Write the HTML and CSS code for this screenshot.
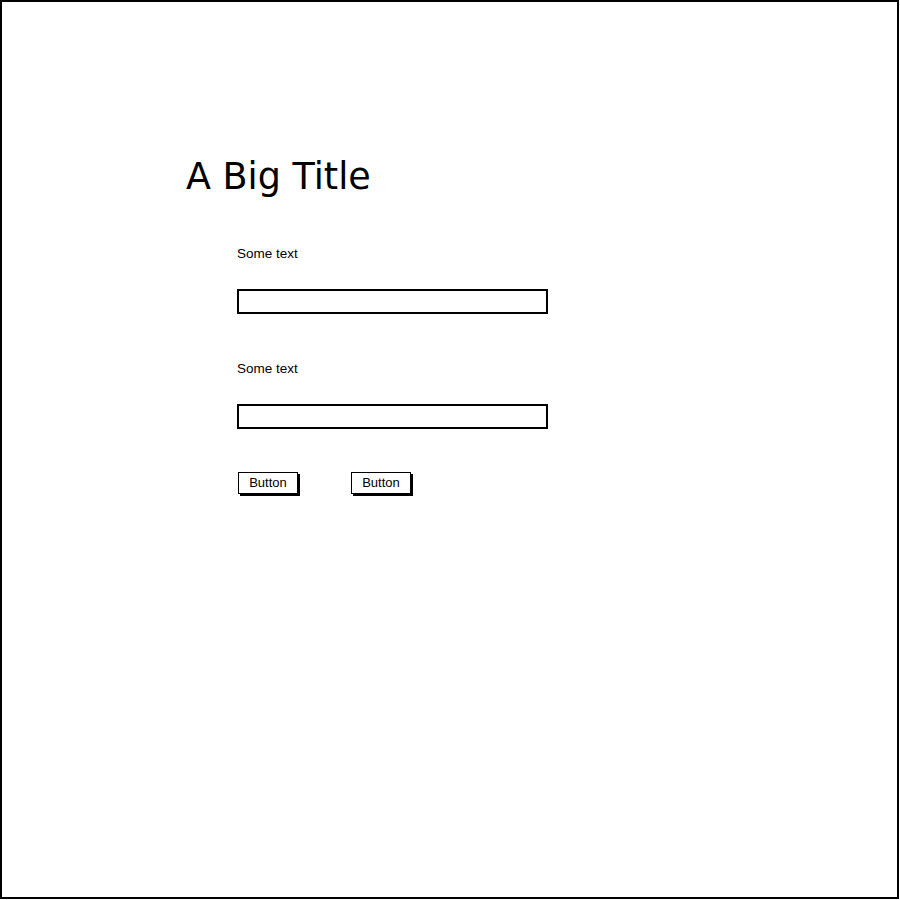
FILE: index.html
```html
<!DOCTYPE html>
<html>
<head>
<meta charset="utf-8">
<link rel="stylesheet" href="styles.css">
</head>
<body>
<div class="frame">
  <h1 class="title">A Big Title</h1>
  <div class="form">
    <div class="label">Some text</div>
    <div class="input"></div>
    <div class="label">Some text</div>
    <div class="input"></div>
    <div class="buttons">
      <div class="btn">Button</div>
      <div class="btn">Button</div>
    </div>
  </div>
</div>
</body>
</html>
```
FILE: styles.css
```css
html, body {
  margin: 0;
  padding: 0;
  background: #fff;
}
.frame {
  box-sizing: border-box;
  width: 899px;
  height: 899px;
  border: 2px solid #000;
  padding: 150px 0 0 184px;
  font-family: "Liberation Sans", Arial, sans-serif;
  color: #000;
}
.title {
  margin: 0;
  font-family: "DejaVu Sans", sans-serif;
  font-weight: 400;
  font-size: 36.5px;
  line-height: 50px;
}
.form {
  margin: 44px 0 0 51px;
  display: flex;
  flex-direction: column;
  align-items: flex-start;
}
.label {
  font-size: 13.5px;
  line-height: 16px;
  margin-bottom: 27px;
}
.input {
  box-sizing: border-box;
  width: 311px;
  height: 25px;
  border: 2px solid #000;
  margin-bottom: 47px;
}
.buttons {
  display: flex;
  gap: 53px;
  margin-top: -4px;
  margin-left: 1px;
}
.btn {
  box-sizing: border-box;
  width: 60px;
  height: 22px;
  border: 1.5px solid #000;
  box-shadow: 2px 2px 0 #000;
  font-size: 13px;
  line-height: 19px;
  text-align: center;
}
```
